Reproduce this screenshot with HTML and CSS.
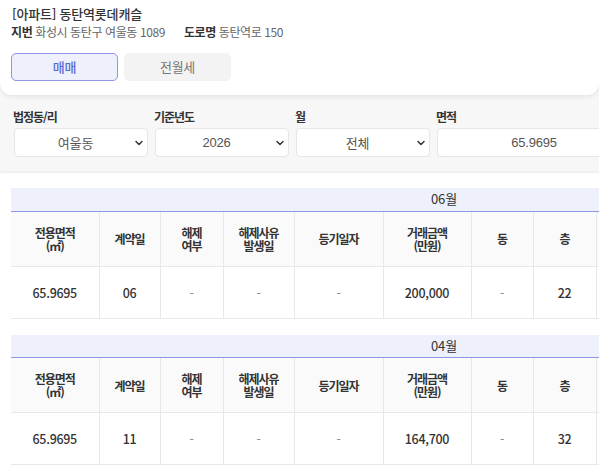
FILE: index.html
```html
<!DOCTYPE html>
<html lang="ko">
<head>
<meta charset="utf-8">
<title>실거래가</title>
<link rel="stylesheet" href="styles.css">
</head>
<body>
<div class="page">
  <header class="card">
    <h1 class="title">[아파트] 동탄역롯데캐슬</h1>
    <p class="addr">
      <span class="addr-item"><b>지번</b> 화성시 동탄구 여울동 1089</span>
      <span class="addr-item"><b>도로명</b> 동탄역로 150</span>
    </p>
    <div class="tabs">
      <button class="tab tab-active">매매</button>
      <button class="tab">전월세</button>
    </div>
  </header>

  <section class="filters">
    <div class="field">
      <label class="field-label">법정동/리</label>
      <div class="control"><span class="control-text">여울동</span><svg class="chev" viewBox="0 0 10 10"><path d="M2 3.5 L5 6.5 L8 3.5" fill="none" stroke="#333" stroke-width="1.5" stroke-linecap="round" stroke-linejoin="round"/></svg></div>
    </div>
    <div class="field">
      <label class="field-label">기준년도</label>
      <div class="control"><span class="control-text">2026</span><svg class="chev" viewBox="0 0 10 10"><path d="M2 3.5 L5 6.5 L8 3.5" fill="none" stroke="#333" stroke-width="1.5" stroke-linecap="round" stroke-linejoin="round"/></svg></div>
    </div>
    <div class="field">
      <label class="field-label">월</label>
      <div class="control"><span class="control-text">전체</span><svg class="chev" viewBox="0 0 10 10"><path d="M2 3.5 L5 6.5 L8 3.5" fill="none" stroke="#333" stroke-width="1.5" stroke-linecap="round" stroke-linejoin="round"/></svg></div>
    </div>
    <div class="field">
      <label class="field-label">면적</label>
      <div class="control control-input"><span class="control-text">65.9695</span></div>
    </div>
  </section>

  <section class="results">
    <table class="deal">
      <colgroup>
        <col class="c88"><col class="c61"><col class="c63"><col class="c71"><col class="c89"><col class="c88"><col class="c62"><col class="c63"><col class="c70"><col class="c70"><col class="c70"><col class="c71">
      </colgroup>
      <thead>
        <tr><th class="month" colspan="12">06월</th></tr>
        <tr class="head">
          <th>전용면적<br>(㎡)</th><th>계약일</th><th>해제<br>여부</th><th>해제사유<br>발생일</th><th>등기일자</th><th>거래금액<br>(만원)</th><th>동</th><th>층</th><th>건축년도</th><th>거래유형</th><th>매수자</th><th>매도자</th>
        </tr>
      </thead>
      <tbody>
        <tr class="row">
          <td>65.9695</td><td>06</td><td class="dash">-</td><td class="dash">-</td><td class="dash">-</td><td>200,000</td><td class="dash">-</td><td>22</td><td>2023</td><td>중개거래</td><td>개인</td><td>개인</td>
        </tr>
      </tbody>
    </table>

    <table class="deal">
      <colgroup>
        <col class="c88"><col class="c61"><col class="c63"><col class="c71"><col class="c89"><col class="c88"><col class="c62"><col class="c63"><col class="c70"><col class="c70"><col class="c70"><col class="c71">
      </colgroup>
      <thead>
        <tr><th class="month" colspan="12">04월</th></tr>
        <tr class="head">
          <th>전용면적<br>(㎡)</th><th>계약일</th><th>해제<br>여부</th><th>해제사유<br>발생일</th><th>등기일자</th><th>거래금액<br>(만원)</th><th>동</th><th>층</th><th>건축년도</th><th>거래유형</th><th>매수자</th><th>매도자</th>
        </tr>
      </thead>
      <tbody>
        <tr class="row">
          <td>65.9695</td><td>11</td><td class="dash">-</td><td class="dash">-</td><td class="dash">-</td><td>164,700</td><td class="dash">-</td><td>32</td><td>2023</td><td>중개거래</td><td>개인</td><td>개인</td>
        </tr>
      </tbody>
    </table>
  </section>
</div>
</body>
</html>
```

FILE: styles.css
```css
* { box-sizing: border-box; }

html, body {
  margin: 0;
  padding: 0;
  background: #ffffff;
}

body {
  font-family: "Noto Sans CJK KR", "Liberation Sans", sans-serif;
  color: #333;
}

.page {
  width: 100%;
  height: 469px;
  overflow: hidden;
  background: #f7f7f7;
  display: flex;
  flex-direction: column;
}

/* top card */
.card {
  position: relative;
  z-index: 2;
  background: #fff;
  padding: 5px 11px 14px;
  border-radius: 0 0 12px 12px;
  box-shadow: 0 2px 5px rgba(0, 0, 0, 0.08);
}

.title {
  margin: 0;
  font-size: 13px;
  line-height: 18px;
  font-weight: 500;
  color: #333;
  padding-left: 1px;
  letter-spacing: -0.2px;
}

.addr {
  margin: 0;
  font-size: 12px;
  line-height: 18px;
  color: #666;
  display: flex;
  gap: 19px;
  letter-spacing: -0.4px;
}

.addr b {
  color: #333;
  font-weight: 700;
}

.tabs {
  display: flex;
  gap: 6px;
  margin-top: 12px;
}

.tab {
  width: 107px;
  height: 28px;
  border: 1px solid #f3f3f3;
  border-radius: 5px;
  background: #f3f3f3;
  color: #777;
  font-family: inherit;
  font-size: 13px;
  line-height: 26px;
  padding: 0;
  letter-spacing: -0.3px;
}

.tab-active {
  background: #eef0fc;
  border-color: #8f96e2;
  color: #5a69d4;
  font-weight: 500;
}

/* filters */
.filters {
  display: grid;
  grid-template-columns: 134px 134px 134px 194px;
  column-gap: 7px;
  padding: 14px 0 16px 14px;
  background: #f7f7f7;
  width: 800px;
}

.field {
  display: flex;
  flex-direction: column;
}

.field-label {
  font-size: 12px;
  line-height: 16px;
  font-weight: 700;
  color: #333;
  margin-bottom: 3px;
  margin-left: -1px;
  letter-spacing: -1px;
}

.control {
  height: 29px;
  background: #fff;
  border: 1px solid #e6e6e6;
  border-radius: 4px;
  display: flex;
  align-items: center;
  padding: 0 3px 0 8px;
}

.control-text {
  flex: 1;
  text-align: center;
  padding-right: 6px;
  font-family: "Liberation Sans", "Noto Sans CJK KR", sans-serif;
  font-size: 13px;
  letter-spacing: -0.2px;
  color: #555;
}

.control-input .control-text {
  padding-right: 5px;
}

.chev {
  width: 10px;
  height: 10px;
  flex: none;
}

/* results */
.results {
  flex: 1;
  background: #fff;
  padding: 15px 0 0 11px;
  box-shadow: 0 -1px 3px rgba(0, 0, 0, 0.05);
  display: flex;
  flex-direction: column;
  gap: 16px;
}

.deal {
  width: 866px;
  table-layout: fixed;
  border-collapse: collapse;
  flex: none;
}

.c88 { width: 88px; }
.c61 { width: 61px; }
.c63 { width: 63px; }
.c71 { width: 71px; }
.c89 { width: 89px; }
.c62 { width: 62px; }
.c70 { width: 70px; }

.month {
  height: 23px;
  background: #eef1fc;
  border-bottom: 1px solid #8e97e3;
  font-size: 13px;
  font-weight: 400;
  color: #333;
  line-height: 16px;
  padding: 0;
}

.head th {
  height: 55px;
  background: #fafafa;
  border-right: 1px solid #e8e8e8;
  border-bottom: 1px solid #e8e8e8;
  font-size: 12px;
  line-height: 13px;
  font-weight: 700;
  color: #333;
  padding: 0;
  letter-spacing: -1px;
}

.row td {
  height: 52px;
  border-right: 1px solid #e8e8e8;
  border-bottom: 1px solid #e8e8e8;
  text-align: center;
  font-size: 12.5px;
  font-weight: 500;
  color: #333;
  padding: 0;
  letter-spacing: -0.3px;
}

.row td.dash {
  color: #888;
  font-weight: 400;
}
```
